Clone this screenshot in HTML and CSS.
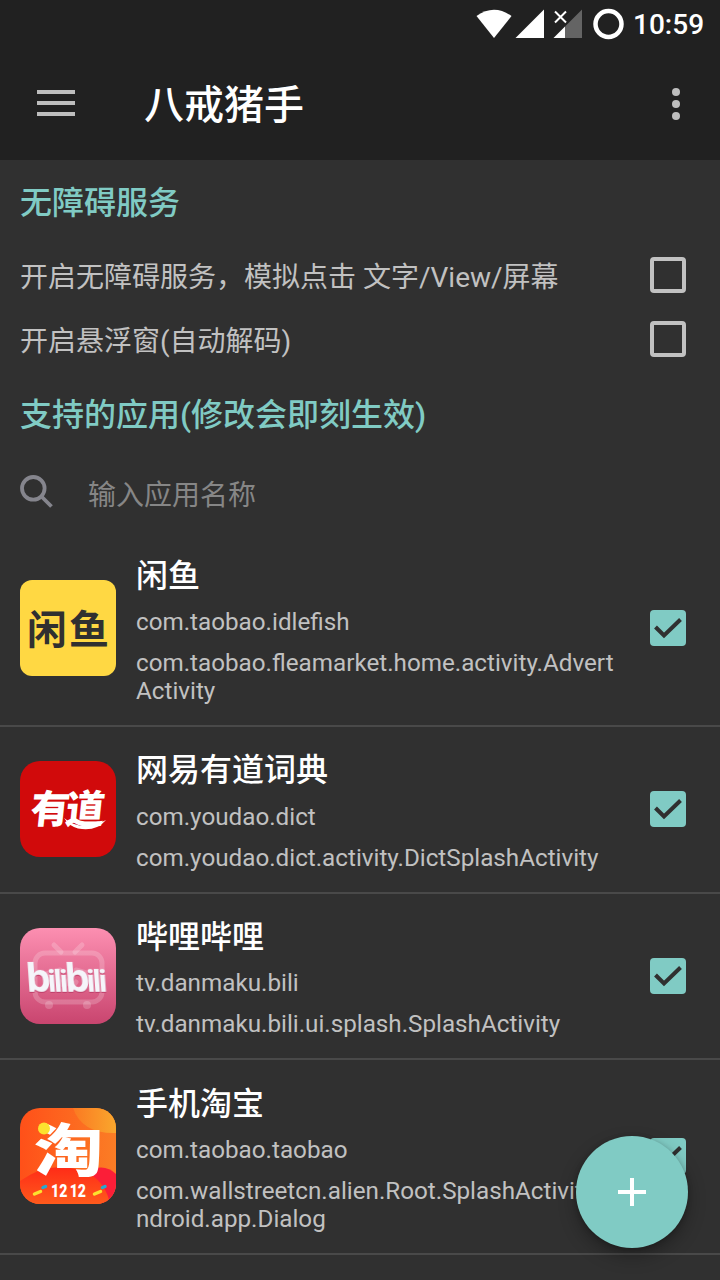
FILE: index.html
```html
<!DOCTYPE html>
<html lang="zh-CN">
<head>
<meta charset="utf-8">
<title>八戒猪手</title>
<link rel="stylesheet" href="styles.css">
</head>
<body>
<div class="screen">
  <header class="top">
    <div class="status">
      <svg class="status-icons" width="148" height="48" viewBox="0 0 148 48">
        <path d="M0.5 16Q18 3.500 35.500 16L18 38Z" fill="#fff"/>
        <path d="M68 9.500V38H39.500Z" fill="#fff"/>
        <path d="M106 9.500V38H89V26.500Z" fill="#646464"/>
        <path d="M89 26.500V38H77.500Z" fill="#fff"/>
        <path d="M79 11.500L90 22.500M90 11.500L79 22.500" stroke="#fff" stroke-width="2"/>
        <circle cx="132.500" cy="24" r="13" fill="none" stroke="#fff" stroke-width="4.500"/>
      </svg>
      <span class="clock">10:59</span>
    </div>
    <div class="appbar">
      <svg class="menu" width="38" height="26" viewBox="0 0 38 26"><path d="M0 2H38M0 13H38M0 24H38" stroke="#bebebe" stroke-width="4"/></svg>
      <h1 class="title">八戒猪手</h1>
      <svg class="more" width="8" height="32" viewBox="0 0 8 32" fill="#bebebe"><circle cx="4" cy="4" r="4"/><circle cx="4" cy="16" r="4"/><circle cx="4" cy="28" r="4"/></svg>
    </div>
  </header>

  <section class="settings">
    <h2 class="heading">无障碍服务</h2>
    <label class="option"><span>开启无障碍服务，模拟点击 文字/View/屏幕</span><i class="box"></i></label>
    <label class="option"><span>开启悬浮窗(自动解码)</span><i class="box"></i></label>
    <h2 class="heading apps">支持的应用(修改会即刻生效)</h2>
    <div class="search">
      <svg width="34" height="34" viewBox="0 0 34 34" fill="none" stroke="#85858d" stroke-width="3.800"><circle cx="13.300" cy="13.300" r="11.300"/><path d="M21.500 21.500L31.500 31.500"/></svg>
      <span>输入应用名称</span>
    </div>
  </section>

  <main class="list">
    <article class="row">
      <svg class="logo" viewBox="0 0 96 96">
        <rect width="96" height="96" rx="12" fill="#ffd843"/>
        <text class="logo-xianyu" x="7 49" y="64">闲鱼</text>
      </svg>
      <div class="info">
        <h3 class="name">闲鱼</h3>
        <p class="pkg">com.taobao.idlefish</p>
        <p class="act">com.taobao.fleamarket.home.activity.Advert<br>Activity</p>
      </div>
      <svg class="check" viewBox="0 0 36 36"><rect width="36" height="36" rx="4" fill="#80cbc4"/><path d="M5.500 17L14 25.500L30.500 9.500" fill="none" stroke="#303030" stroke-width="4"/></svg>
    </article>

    <article class="row">
      <svg class="logo" viewBox="0 0 96 96">
        <rect width="96" height="96" rx="20" fill="#d10a0b"/>
        <text class="logo-youdao" x="16 51" y="62" transform="skewX(-6)">有道</text>
        <path d="M44 57Q62 72 86 59Q76 71 58 67.500Q49 65 44 57Z" fill="#fff"/>
      </svg>
      <div class="info">
        <h3 class="name">网易有道词典</h3>
        <p class="pkg">com.youdao.dict</p>
        <p class="act">com.youdao.dict.activity.DictSplashActivity</p>
      </div>
      <svg class="check" viewBox="0 0 36 36"><rect width="36" height="36" rx="4" fill="#80cbc4"/><path d="M5.500 17L14 25.500L30.500 9.500" fill="none" stroke="#303030" stroke-width="4"/></svg>
    </article>

    <article class="row">
      <svg class="logo" viewBox="0 0 96 96">
        <defs><linearGradient id="pink" x2="0" y2="1"><stop stop-color="#fc8fb1"/><stop offset="1" stop-color="#c9456f"/></linearGradient></defs>
        <rect width="96" height="96" rx="20" fill="url(#pink)"/>
        <g fill="none" stroke="#fff" stroke-opacity=".2" stroke-width="5" stroke-linecap="round">
          <path d="M34 17L41 24M62 17L55 24"/>
          <rect x="15" y="25" width="67" height="49" rx="10"/>
          <path d="M26 46L40 42M56 42L70 46M40 54Q44 60 48 54Q52 60 56 54"/>
        </g>
        <circle cx="29" cy="77" r="4" fill="#fff" fill-opacity=".2"/><circle cx="67" cy="77" r="4" fill="#fff" fill-opacity=".2"/>
        <text class="logo-bili" transform="translate(-5 0) skewX(4)" y="64"><tspan class="big" x="7">b</tspan><tspan x="28.500 34.500 40.500">ili</tspan><tspan class="big" x="46">b</tspan><tspan x="67.500 73.500 79.500">ili</tspan></text>
      </svg>
      <div class="info">
        <h3 class="name">哔哩哔哩</h3>
        <p class="pkg">tv.danmaku.bili</p>
        <p class="act">tv.danmaku.bili.ui.splash.SplashActivity</p>
      </div>
      <svg class="check" viewBox="0 0 36 36"><rect width="36" height="36" rx="4" fill="#80cbc4"/><path d="M5.500 17L14 25.500L30.500 9.500" fill="none" stroke="#303030" stroke-width="4"/></svg>
    </article>

    <article class="row">
      <svg class="logo" viewBox="0 0 96 96">
        <defs>
          <linearGradient id="orange" x2="1" y2="0"><stop stop-color="#ff5019"/><stop offset="1" stop-color="#fb7d25"/></linearGradient>
          <linearGradient id="gold" x2="1" y2="0"><stop stop-color="#fb7922"/><stop offset="1" stop-color="#f9a72d"/></linearGradient>
          <linearGradient id="hill" x2="0" y2="1"><stop stop-color="#ff2b17"/><stop offset="1" stop-color="#ff5a1c"/></linearGradient>
          <clipPath id="tile"><rect width="96" height="96" rx="20"/></clipPath>
        </defs>
        <g clip-path="url(#tile)">
          <rect width="96" height="96" fill="url(#orange)"/>
          <path d="M53 0Q62 26 96 25V0Z" fill="url(#gold)"/>
          <path d="M66 64Q84 54 96 66V96H80Z" fill="#fb1e38"/>
          <path d="M0 73Q34 49 70 66Q86 76 90 96H0Z" fill="url(#hill)"/>
        </g>
        <text class="logo-tao" x="14" y="63" textLength="69" lengthAdjust="spacingAndGlyphs">淘</text>
        <circle cx="24" cy="20.500" r="6" fill="#fce22f"/>
        <text class="logo-date" x="31" y="88.500" textLength="35" lengthAdjust="spacingAndGlyphs">12<tspan dx="-1.500"> </tspan>12</text>
        <g stroke-width="3.500" stroke-linecap="round">
          <path d="M14.500 86L20.500 83.500M74.500 86L80.500 83.500" stroke="#fce22f"/>
          <path d="M23 79.500L25.500 78.500M82.500 79.500L85 78.500" stroke="#28a8d0"/>
        </g>
      </svg>
      <div class="info">
        <h3 class="name">手机淘宝</h3>
        <p class="pkg">com.taobao.taobao</p>
        <p class="act">com.wallstreetcn.alien.Root.SplashActivity.a<br>ndroid.app.Dialog</p>
      </div>
      <svg class="check" viewBox="0 0 36 36"><rect width="36" height="36" rx="4" fill="#80cbc4"/><path d="M5.500 17L14 25.500L30.500 9.500" fill="none" stroke="#303030" stroke-width="4"/></svg>
    </article>
  </main>

  <button class="fab" aria-label="添加"><svg width="28" height="28" viewBox="0 0 28 28"><path d="M14 0V28M0 14H28" stroke="#fff" stroke-width="4"/></svg></button>
</div>
</body>
</html>
```

FILE: styles.css
```css
* { box-sizing: border-box; margin: 0; padding: 0; }
body { background: #303030; font-family: Roboto, "Noto Sans CJK SC", sans-serif; }
.screen { position: relative; width: 720px; height: 1280px; overflow: hidden; background: #303030; }

.top { height: 160px; background: #212121; }
.status { display: flex; height: 48px; padding-left: 476px; align-items: center; }
.clock { padding-top: 2px; margin-left: 9px; color: #fff; font-size: 28px; font-weight: 500; line-height: 48px; white-space: nowrap; }
.appbar { display: flex; height: 112px; padding: 0 40px 0 37px; align-items: center; }
.menu { margin-top: -2px; }
.title { flex: 1; padding-top: 3px; margin-left: 69px; color: #fff; font-size: 40px; font-weight: 500; line-height: 56px; }

.settings { display: flex; flex-direction: column; height: 372.4px; padding: 20px 34px 0 20px; }
.heading { height: 46px; line-height: 46px; color: #80cbc4; font-size: 32px; font-weight: 500; }
.option { display: flex; height: 64px; align-items: center; justify-content: space-between; color: #c1c1c1; font-size: 28px; }
.option span { padding-bottom: 1px; }
.heading + .option { margin-top: 17px; }
.box { width: 36px; height: 36px; border: 4px solid #c1c1c1; border-radius: 4px; }
.heading.apps { margin-top: 21px; }
.search { display: flex; margin-top: 30px; height: 50px; align-items: center; gap: 34px; color: #868686; font-size: 28px; }
.search svg { margin-top: -3px; }

.row { display: flex; align-items: center; padding: 23.5px 34px 20px 20px; border-bottom: 2px solid #494949; }
.logo { flex: none; width: 96px; height: 96px; margin-top: -4px; overflow: visible; }
.info { flex: 1; margin-left: 20px; white-space: nowrap; }
.name { height: 40px; line-height: 40px; color: #fff; font-size: 32px; font-weight: 500; }
.pkg, .act { color: #c1c1c1; font-size: 24.22px; line-height: 28px; }
.pkg { margin-top: 12.2px; }
.act { margin-top: 12.9px; }
.check { flex: none; width: 36px; height: 36px; margin-top: -4px; }

.logo-xianyu { font: 700 40px "Noto Sans CJK SC", sans-serif; fill: #303030; }
.logo-youdao { font: 900 39px "Noto Sans CJK SC", sans-serif; fill: #fff; }
.logo-bili { font: 700 31px "Open Sans", sans-serif; fill: #f5f5fa; filter: drop-shadow(0 1.5px 0 #bd3d68); }
.logo-bili .big { font-size: 40px; }
.logo-tao { font: 900 57px "Noto Sans CJK SC", sans-serif; fill: #fff; }
.logo-date { font: 900 18px Roboto, sans-serif; fill: #fff; }

.fab { position: absolute; left: 576px; top: 1136px; display: flex; width: 112px; height: 112px; align-items: center; justify-content: center; border: 0; border-radius: 50%; background: #80cbc4; box-shadow: 0 8px 18px rgba(0, 0, 0, .3), 0 1px 5px rgba(0, 0, 0, .22); }
```
